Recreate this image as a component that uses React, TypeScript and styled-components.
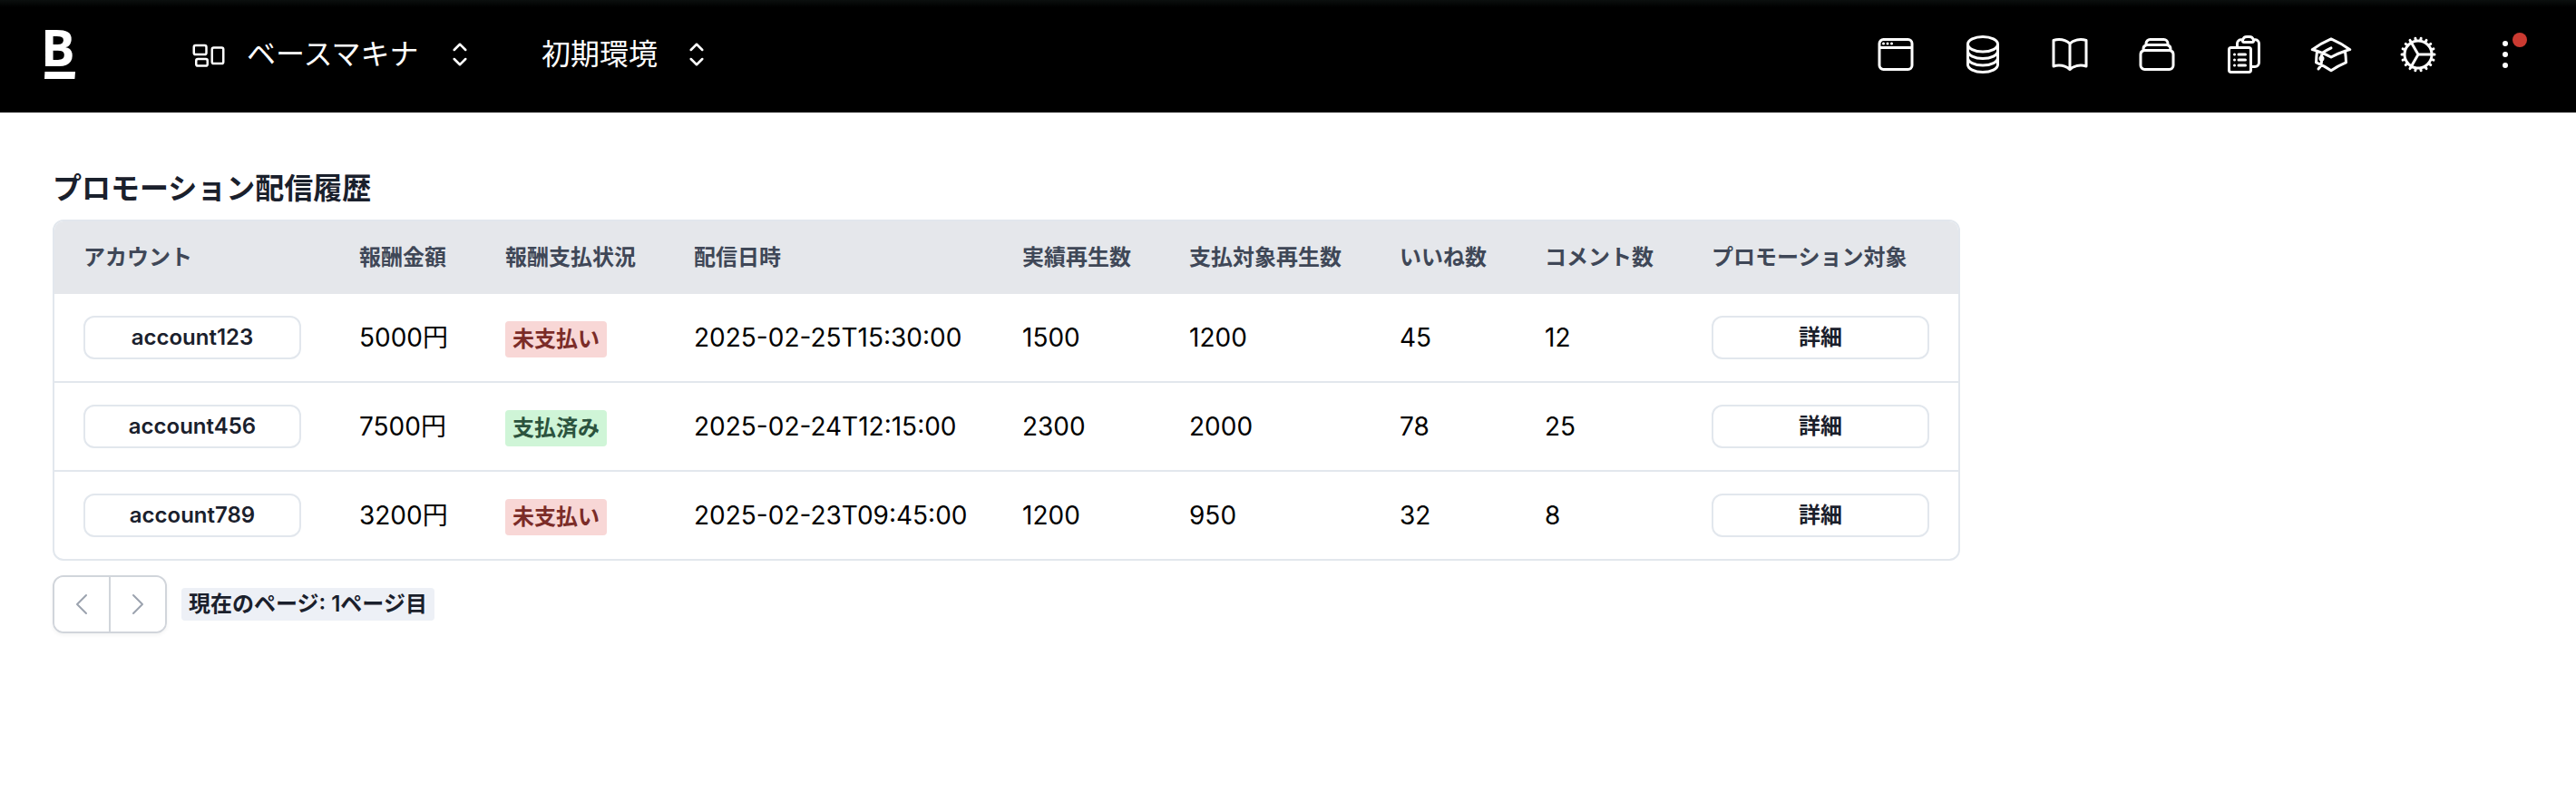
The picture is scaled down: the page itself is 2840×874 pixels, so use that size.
import React from "react";
import styled, { createGlobalStyle } from "styled-components";
import {
  HiOutlineAcademicCap,
  HiOutlineBookOpen,
  HiOutlineChevronLeft,
  HiOutlineChevronRight,
  HiOutlineChevronUpDown,
  HiOutlineCircleStack,
  HiOutlineClipboardDocumentList,
  HiOutlineCog,
  HiOutlineEllipsisVertical,
  HiOutlineRectangleGroup,
  HiOutlineRectangleStack,
  HiOutlineWindow,
} from "react-icons/hi2";

const GlobalStyle = createGlobalStyle`
  *, *::before, *::after { box-sizing: border-box; }
  body {
    margin: 0;
    background: #ffffff;
    color: #000000;
    font-family: Inter, "Noto Sans CJK JP", sans-serif;
    font-size: 28px;
  }
  button, select { font: inherit; color: inherit; }
`;

const Header = styled.header`
  display: flex;
  align-items: center;
  justify-content: space-between;
  height: 124px;
  padding: 0 54px 4px 42px;
  background: linear-gradient(#0b0f0e, #000000 8px);
  color: #ffffff;
`;

const HeaderSide = styled.div`
  display: flex;
  align-items: center;
`;

const LogoLink = styled.a`
  display: flex;
  margin-right: 120px;
  color: #ffffff;
  text-decoration: none;
`;

const Switcher = styled.label`
  display: flex;
  align-items: center;
  gap: 22px;
  margin-right: 70px;
`;

const SwitcherSelect = styled.select`
  appearance: none;
  margin: 0;
  padding: 0;
  border: 0;
  background: transparent;
  font-size: 32px;
  line-height: 48px;
`;

const IconNav = styled.nav`
  display: flex;
  gap: 48px;
`;

const IconButton = styled.button`
  position: relative;
  display: flex;
  padding: 0;
  border: 0;
  background: transparent;
`;

const NoticeDot = styled.span`
  position: absolute;
  top: 0;
  right: 0;
  width: 16px;
  height: 16px;
  border-radius: 50%;
  background: #cb3a31;
`;

const Main = styled.main`
  display: flex;
  flex-direction: column;
  align-items: flex-start;
  padding: 60px 58px;
`;

const Title = styled.h1`
  margin: 0 0 10px;
  color: #1a202c;
  font-size: 32px;
  font-weight: 600;
  line-height: 48px;
`;

const TableFrame = styled.div`
  overflow: hidden;
  border: 2px solid #e2e7ed;
  border-radius: 12px;
`;

const Table = styled.table`
  width: min-content;
  table-layout: fixed;
  border-spacing: 0;
  text-align: left;
  white-space: nowrap;
`;

const Column = styled.col<{ $width: number }>`
  width: ${(p) => p.$width}px;
`;

const HeadCell = styled.th`
  padding: 24px 0 24px 32px;
  background: #e5e7eb;
  color: #3f4757;
  font-size: 24px;
  font-weight: 600;
  line-height: 32px;
`;

const BodyCell = styled.td`
  padding: 24px 0 24px 32px;
  line-height: 48px;

  tr:not(:last-child) > & {
    border-bottom: 2px solid #e2e7ed;
  }
`;

const CellButton = styled.button`
  display: block;
  width: 240px;
  height: 48px;
  padding: 0;
  border: 2px solid #e2e7ed;
  border-radius: 12px;
  background: #ffffff;
  color: #1a202c;
  font-size: 24px;
  font-weight: 600;
  line-height: 44px;
`;

type Status = "unpaid" | "paid";

const StatusBadge = styled.span<{ $status: Status }>`
  display: block;
  width: fit-content;
  margin-top: 4px;
  padding: 0 8px;
  border-radius: 4px;
  background: ${(p) => (p.$status === "paid" ? "#cff5d7" : "#f8d7d6")};
  color: ${(p) => (p.$status === "paid" ? "#2c533e" : "#7b2c28")};
  font-size: 24px;
  font-weight: 600;
  line-height: 40px;
`;

const Pagination = styled.nav`
  display: flex;
  align-items: center;
  gap: 16px;
  margin-top: 16px;
`;

const PagerGroup = styled.div`
  display: flex;
  overflow: hidden;
  border: 2px solid #d1d5db;
  border-radius: 12px;
  box-shadow: 0 2px 4px rgba(0, 0, 0, 0.05);
`;

const PagerButton = styled.button`
  display: flex;
  padding: 14px;
  border: 0;
  background: #ffffff;
  color: #9ca3af;

  & + & {
    border-left: 2px solid #d1d5db;
  }
`;

const PageLabel = styled.span`
  padding: 0 8px;
  border-radius: 4px;
  background: #edf0f6;
  color: #1a202c;
  font-size: 24px;
  font-weight: 600;
  line-height: 36px;
`;

const columns = [
  { title: "アカウント", width: 304 },
  { title: "報酬金額", width: 161 },
  { title: "報酬支払状況", width: 208 },
  { title: "配信日時", width: 362 },
  { title: "実績再生数", width: 184 },
  { title: "支払対象再生数", width: 232 },
  { title: "いいね数", width: 160 },
  { title: "コメント数", width: 184 },
  { title: "プロモーション対象", width: 304 },
];

interface Delivery {
  account: string;
  reward: string;
  status: Status;
  deliveredAt: string;
  plays: number;
  paidPlays: number;
  likes: number;
  comments: number;
}

const deliveries: Delivery[] = [
  { account: "account123", reward: "5000円", status: "unpaid", deliveredAt: "2025-02-25T15:30:00", plays: 1500, paidPlays: 1200, likes: 45, comments: 12 },
  { account: "account456", reward: "7500円", status: "paid", deliveredAt: "2025-02-24T12:15:00", plays: 2300, paidPlays: 2000, likes: 78, comments: 25 },
  { account: "account789", reward: "3200円", status: "unpaid", deliveredAt: "2025-02-23T09:45:00", plays: 1200, paidPlays: 950, likes: 32, comments: 8 },
];

const statusText: Record<Status, string> = { unpaid: "未支払い", paid: "支払済み" };

const navItems = [
  { label: "画面", Icon: HiOutlineWindow },
  { label: "データソース", Icon: HiOutlineCircleStack },
  { label: "ドキュメント", Icon: HiOutlineBookOpen },
  { label: "アクション", Icon: HiOutlineRectangleStack },
  { label: "履歴", Icon: HiOutlineClipboardDocumentList },
  { label: "チュートリアル", Icon: HiOutlineAcademicCap },
  { label: "設定", Icon: HiOutlineCog },
];

function Logo() {
  return (
    <svg width="48" height="96" viewBox="-6 -16 48 96" fill="currentColor" aria-hidden="true">
      <text x="-3" y="45" fontFamily="'Open Sans', sans-serif" fontWeight="700" fontSize="56">
        B
      </text>
      <path d="M1.4 51H35l-.6 8H1z" />
    </svg>
  );
}

export default function App() {
  return (
    <>
      <GlobalStyle />
      <Header>
        <HeaderSide>
          <LogoLink href="#" aria-label="ホーム">
            <Logo />
          </LogoLink>
          <Switcher>
            <HiOutlineRectangleGroup size={40} />
            <SwitcherSelect aria-label="プロジェクト">
              <option>ベースマキナ</option>
            </SwitcherSelect>
            <HiOutlineChevronUpDown size={40} />
          </Switcher>
          <Switcher>
            <SwitcherSelect aria-label="環境">
              <option>初期環境</option>
            </SwitcherSelect>
            <HiOutlineChevronUpDown size={40} />
          </Switcher>
        </HeaderSide>
        <IconNav>
          {navItems.map(({ label, Icon }) => (
            <IconButton key={label} type="button" aria-label={label}>
              <Icon size={48} />
            </IconButton>
          ))}
          <IconButton type="button" aria-label="メニュー">
            <HiOutlineEllipsisVertical size={48} />
            <NoticeDot />
          </IconButton>
        </IconNav>
      </Header>
      <Main>
        <Title>プロモーション配信履歴</Title>
        <TableFrame>
          <Table>
            <colgroup>
              {columns.map((c) => (
                <Column key={c.title} $width={c.width} />
              ))}
            </colgroup>
            <thead>
              <tr>
                {columns.map((c) => (
                  <HeadCell key={c.title} scope="col">
                    {c.title}
                  </HeadCell>
                ))}
              </tr>
            </thead>
            <tbody>
              {deliveries.map((d) => (
                <tr key={d.account}>
                  <BodyCell>
                    <CellButton type="button">{d.account}</CellButton>
                  </BodyCell>
                  <BodyCell>{d.reward}</BodyCell>
                  <BodyCell>
                    <StatusBadge $status={d.status}>{statusText[d.status]}</StatusBadge>
                  </BodyCell>
                  <BodyCell>{d.deliveredAt}</BodyCell>
                  <BodyCell>{d.plays}</BodyCell>
                  <BodyCell>{d.paidPlays}</BodyCell>
                  <BodyCell>{d.likes}</BodyCell>
                  <BodyCell>{d.comments}</BodyCell>
                  <BodyCell>
                    <CellButton type="button">詳細</CellButton>
                  </BodyCell>
                </tr>
              ))}
            </tbody>
          </Table>
        </TableFrame>
        <Pagination aria-label="ページ送り">
          <PagerGroup>
            <PagerButton type="button" aria-label="前のページ">
              <HiOutlineChevronLeft size={32} />
            </PagerButton>
            <PagerButton type="button" aria-label="次のページ">
              <HiOutlineChevronRight size={32} />
            </PagerButton>
          </PagerGroup>
          <PageLabel>現在のページ: 1ページ目</PageLabel>
        </Pagination>
      </Main>
    </>
  );
}
